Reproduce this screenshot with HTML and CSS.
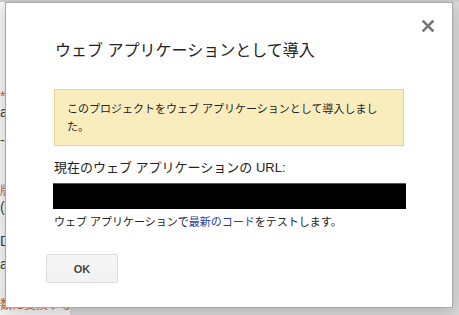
FILE: index.html
```html
<!DOCTYPE html>
<html lang="ja">
<head>
<meta charset="utf-8">
<title>ウェブ アプリケーションとして導入</title>
<link rel="stylesheet" href="styles.css">
</head>
<body>
<div class="topband"></div>
<div class="page">
  <p class="bg-line orange l1">*必須項目</p>
  <p class="bg-line gray l2">api</p>
  <p class="bg-line gray l3">-</p>
  <p class="bg-line orange l4">版を管理</p>
  <p class="bg-line gray l5">(新規)</p>
  <p class="bg-line dark l6">Deploy</p>
  <p class="bg-line gray l7">app</p>
  <p class="bg-line orange l8">数に変換する</p>
</div>

<div class="dialog" role="dialog">
  <button class="close" aria-label="閉じる">
    <svg width="12" height="12" viewBox="0 0 12 12"><path d="M1.5 1.5 L10.5 10.5 M10.5 1.5 L1.5 10.5" stroke="#777" stroke-width="2.6" stroke-linecap="square"/></svg>
  </button>
  <h1 class="title">ウェブ アプリケーションとして導入</h1>
  <div class="notice">このプロジェクトをウェブ アプリケーションとして導入しました。</div>
  <p class="label">現在のウェブ アプリケーションの URL:</p>
  <div class="url-box"></div>
  <p class="hint">ウェブ アプリケーションで<a href="#" class="link">最新のコード</a>をテストします。</p>
  <div class="actions">
    <button class="btn">OK</button>
  </div>
</div>
</body>
</html>
```

FILE: styles.css
```css
* { box-sizing: border-box; }

html, body {
  margin: 0;
  padding: 0;
  width: 459px;
  height: 315px;
  overflow: hidden;
}

body {
  background: #dadada;
  font-family: "Liberation Sans", "Noto Sans CJK JP", sans-serif;
  color: #222;
  position: relative;
}

.topband {
  height: 2px;
  background: #cdcdcd;
}

.page {
  display: flex;
  flex-direction: column;
  width: 70px;
  height: 313px;
  background: #f7f7f7;
  overflow: hidden;
}

.bg-line {
  margin: 0;
  font-size: 14px;
  line-height: 16px;
  white-space: nowrap;
}
.orange { color: #c2673a; }
.gray { color: #444; }
.dark { color: #333a55; }

.l1 { margin-top: 86px; }
.l2 { margin-top: 0; }
.l3 { margin-top: 12px; }
.l4 { margin-top: 35px; font-size: 12px; }
.l5 { margin-top: 0; }
.l6 { margin-top: 18px; }
.l7 { margin-top: 7px; }
.l8 { margin-top: 25px; font-size: 12px; }

.dialog {
  position: absolute;
  left: 5px;
  top: 2px;
  width: 448px;
  height: 306px;
  background: #fff;
  border: 1px solid #a8a8a8;
  box-shadow: 0 4px 16px rgba(0, 0, 0, 0.2);
  padding: 38px 0 0 48px;
  display: flex;
  flex-direction: column;
  align-items: flex-start;
}

.close {
  position: absolute;
  top: 16px;
  right: 17px;
  width: 14px;
  height: 14px;
  padding: 0;
  border: 0;
  background: transparent;
  display: flex;
  align-items: center;
  justify-content: center;
}

.title {
  margin: 0 0 0 1px;
  font-size: 16px;
  line-height: 20px;
  font-weight: normal;
  color: #222;
}

.notice {
  margin-top: 28px;
  width: 350px;
  height: 57px;
  background: #f9edbe;
  border: 1px solid #e6d28c;
  padding: 10px 12px 8px 12px;
  font-size: 11px;
  line-height: 18px;
  color: #222;
}

.label {
  margin: 13px 0 0 0;
  font-size: 13px;
  line-height: 18px;
  color: #222;
}

.url-box {
  margin-top: 6px;
  margin-left: -1px;
  width: 353px;
  height: 26px;
  background: #000;
  border-top: 1px solid #555;
}

.hint {
  margin: 5px 0 0 0;
  font-size: 11px;
  line-height: 16px;
  color: #222;
}

.link {
  color: #2440a8;
  text-decoration: none;
}

.actions {
  margin-top: 24px;
  margin-left: -8px;
  display: flex;
}

.btn {
  width: 72px;
  height: 29px;
  border: 1px solid #dcdcdc;
  border-radius: 2px;
  background: linear-gradient(#f6f6f6, #f1f1f1);
  font-family: "Liberation Sans", "Noto Sans CJK JP", sans-serif;
  font-size: 11px;
  font-weight: bold;
  color: #444;
  padding: 0;
}
```
